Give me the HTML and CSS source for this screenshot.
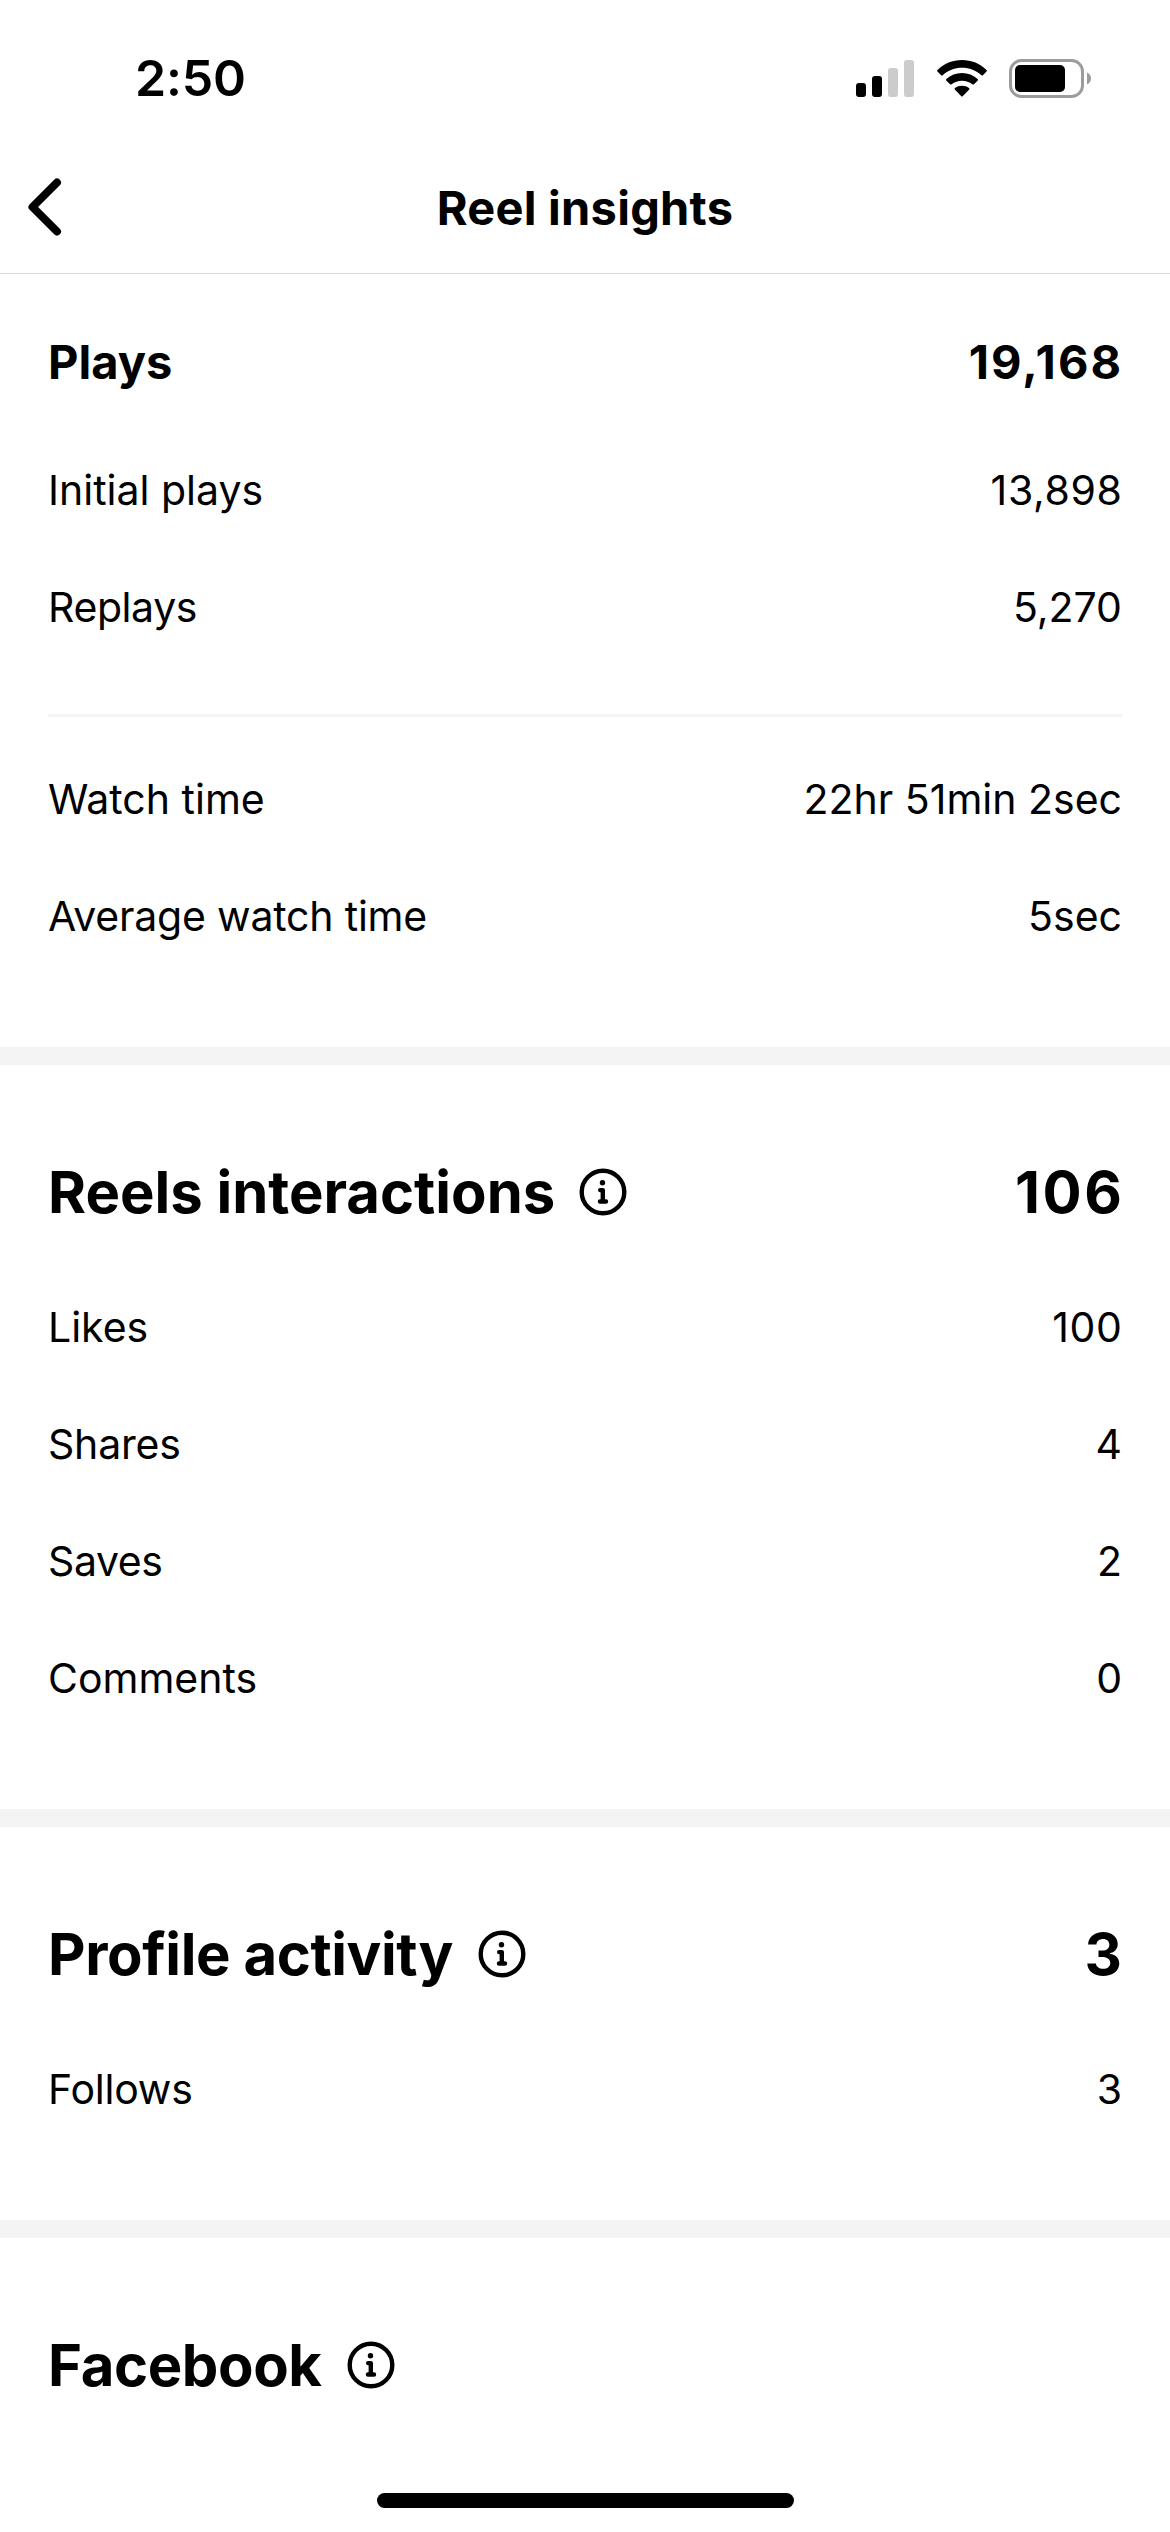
FILE: index.html
```html
<!DOCTYPE html>
<html lang="en">
<head>
<meta charset="utf-8">
<title>Reel insights</title>
<link rel="stylesheet" href="styles.css">
</head>
<body>
<div class="screen">
  <div class="status">
    <div class="time">2:50</div>
    <div class="status-icons">
      <svg width="59" height="37" viewBox="0 0 59 37"><rect x="0" y="23" width="10" height="14" rx="3"/><rect x="16" y="16" width="10" height="21" rx="3"/><rect class="dim" x="32" y="8" width="10" height="29" rx="3"/><rect class="dim" x="48" y="0" width="10" height="37" rx="3"/></svg>
      <svg width="50" height="37" viewBox="0 0 50 37"><path d="M25 0C15.500 0 6.900 3.500.5 9.900c-.6.600-.6 1.200 0 1.700l3.600 3.600c.5.500 1 .5 1.500 0C11 10.300 17.600 7.700 25 7.700s14 2.600 19.400 7.500c.5.500 1 .5 1.500 0l3.600-3.600c.6-.5.6-1.100 0-1.700C43.100 3.500 34.500 0 25 0z"/><path d="M25 13c-6 0-11.400 2.200-15.600 6-.6.600-.6 1.100 0 1.700l3.700 3.500c.5.500 1 .5 1.500.1C17.600 21.900 21 20.700 25 20.700s7.400 1.200 10.400 3.600c.5.400 1 .4 1.500-.1l3.700-3.500c.6-.6.600-1.100 0-1.700C36.400 15.200 31 13 25 13z"/><path d="M25 25.700c-2.700 0-5 .8-7 2.300-.6.500-.6 1.100 0 1.700l6.300 6.500c.5.500.9.500 1.400 0l6.300-6.500c.6-.6.600-1.200 0-1.700-2-1.500-4.300-2.300-7-2.300z"/></svg>
      <svg width="83" height="39" viewBox="0 0 83 39"><rect class="shell" x="1.500" y="1.500" width="72" height="36" rx="11"/><rect x="6" y="6" width="50" height="27" rx="5"/><path class="cap" d="M78 13.500c2.400.9 4 3.200 4 6s-1.600 5.100-4 6z"/></svg>
    </div>
  </div>
  <header class="nav">
    <svg class="back" width="37" height="60" viewBox="0 0 37 60"><path d="M31 5.500L6.500 30 31 54.500"/></svg>
    <h1 class="title">Reel insights</h1>
  </header>
  <section class="group plays">
    <div class="row total"><span>Plays</span><span class="sum">19,168</span></div>
    <div class="row"><span>Initial plays</span><span class="count">13,898</span></div>
    <div class="row"><span class="tight">Replays</span><span>5,270</span></div>
    <div class="rule"></div>
    <div class="row"><span>Watch time</span><span>22hr 51min 2sec</span></div>
    <div class="row"><span class="snug">Average watch time</span><span>5sec</span></div>
  </section>
  <section class="group">
    <div class="row heading"><h2>Reels interactions</h2><svg class="info" viewBox="0 0 48 48"><circle cx="24" cy="24" r="21.300"/><circle class="dot" cx="23.500" cy="14.700" r="2.700"/><path d="M21.200 22.100h2.600V33.500M21 33.500h6"/></svg><b>106</b></div>
    <div class="row"><span>Likes</span><span class="count">100</span></div>
    <div class="row"><span class="snug">Shares</span><span>4</span></div>
    <div class="row"><span class="tight">Saves</span><span>2</span></div>
    <div class="row"><span>Comments</span><span>0</span></div>
  </section>
  <section class="group">
    <div class="row heading"><h2 class="tight">Profile activity</h2><svg class="info" viewBox="0 0 48 48"><circle cx="24" cy="24" r="21.300"/><circle class="dot" cx="23.500" cy="14.700" r="2.700"/><path d="M21.200 22.100h2.600V33.500M21 33.500h6"/></svg><b>3</b></div>
    <div class="row"><span class="snug">Follows</span><span>3</span></div>
  </section>
  <section class="group last">
    <div class="row heading"><h2 class="tight">Facebook</h2><svg class="info" viewBox="0 0 48 48"><circle cx="24" cy="24" r="21.300"/><circle class="dot" cx="23.500" cy="14.700" r="2.700"/><path d="M21.200 22.100h2.600V33.500M21 33.500h6"/></svg></div>
  </section>
  <div class="home"></div>
</div>
</body>
</html>
```
FILE: styles.css
```css
* { box-sizing: border-box; }
body { margin: 0; background: #fff; color: #000; font-family: Inter, "Liberation Sans", sans-serif; }
svg { display: block; flex: none; }
h1, h2 { margin: 0; }
.screen { width: 1170px; height: 2532px; display: flex; flex-direction: column; overflow: hidden; }
.screen > * { flex: none; }
.status { height: 141px; padding: 15px 78px 0 135px; display: flex; align-items: center; justify-content: space-between; }
.time { font-size: 50px; font-weight: 600; letter-spacing: -.2px; }
.status-icons { display: flex; align-items: center; gap: 22px; }
.dim { fill: #ccc; }
.shell { fill: none; stroke: #9c9c9c; stroke-width: 3; }
.cap { fill: #9c9c9c; }
.nav { height: 133px; border-bottom: 1px solid #dadada; display: grid; grid-template-columns: 80px 1fr 80px; align-items: center; }
.back { margin-left: 26px; fill: none; stroke: #000; stroke-width: 8; stroke-linecap: round; stroke-linejoin: round; }
.title { text-align: center; font-size: 47px; font-weight: 700; letter-spacing: .25px; padding-top: 1px; }
.group { padding: 71px 48px 73px; border-bottom: 18px solid #f4f4f4; }
.plays { padding-top: 29px; }
.last { padding-bottom: 0; border: 0; }
.row { height: 117px; display: flex; align-items: center; justify-content: space-between; font-size: 41px; }
.snug { letter-spacing: -.2px; }
.tight { letter-spacing: -.4px; }
.count { letter-spacing: .65px; margin-right: -.65px; }
.total { height: 128px; padding-bottom: 12px; font-size: 47px; font-weight: 700; }
.sum { letter-spacing: 2px; margin-right: -1px; }
.rule { height: 3px; margin: 49px 0 23px; background: #f4f4f4; }
.heading { height: 132px; padding-bottom: 21px; font-size: 58px; }
.heading h2 { font-size: 58px; font-weight: 700; }
.heading b { margin-left: auto; font-weight: 700; letter-spacing: 2.600px; margin-right: -2.600px; }
.info { width: 48px; height: 48px; margin-left: 24px; fill: none; stroke: #000; stroke-width: 4.400; stroke-linecap: round; stroke-linejoin: round; }
.tight + .info { margin-left: 25px; }
.heading .info:last-child { margin-right: auto; }
.dot { fill: #000; stroke: none; }
.home { width: 417px; height: 15px; margin: auto auto 24px; border-radius: 8px; background: #000; }
```
